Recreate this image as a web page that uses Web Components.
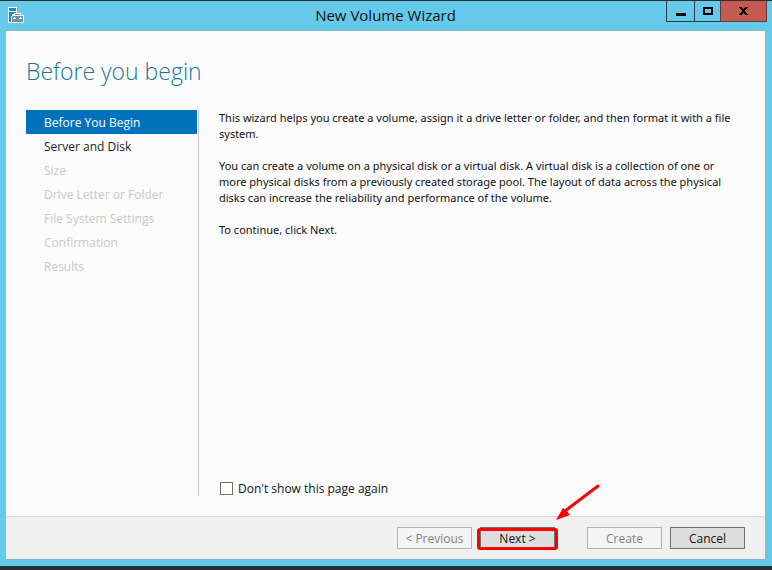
<!DOCTYPE html>
<html lang="en">
<head>
<meta charset="utf-8">
<title>New Volume Wizard</title>
<style>
  html, body { height: 100%; margin: 0; }
  body {
    background: #2d2d30;
    color: #111;
    font: 12px/16px "Open Sans", "Noto Sans", sans-serif;
  }
</style>
</head>
<body>

<wizard-window caption="New Volume Wizard">
  <wizard-page heading="Before you begin">
    <wizard-steps slot="steps">
      <wizard-step state="current">Before You Begin</wizard-step>
      <wizard-step state="ready">Server and Disk</wizard-step>
      <wizard-step>Size</wizard-step>
      <wizard-step>Drive Letter or Folder</wizard-step>
      <wizard-step>File System Settings</wizard-step>
      <wizard-step>Confirmation</wizard-step>
      <wizard-step>Results</wizard-step>
    </wizard-steps>
    <wizard-text>
      <p>This wizard helps you create a volume, assign it a drive letter or folder, and then format it with a file system.</p>
      <p>You can create a volume on a physical disk or a virtual disk. A virtual disk is a collection of one or more physical disks from a previously created storage pool. The layout of data across the physical disks can increase the reliability and performance of the volume.</p>
      <p>To continue, click Next.</p>
    </wizard-text>
    <wizard-check slot="option">Don't show this page again</wizard-check>
  </wizard-page>
  <wizard-actions slot="footer">
    <wizard-button disabled>&lt; Previous</wizard-button>
    <wizard-button marked>Next &gt;</wizard-button>
    <wizard-button slot="finish" disabled>Create</wizard-button>
    <wizard-button slot="finish">Cancel</wizard-button>
  </wizard-actions>
</wizard-window>

<script>
const define = (name, render) => customElements.define(name, class extends HTMLElement {
  constructor() {
    super();
    this.attachShadow({ mode: "open" });
  }
  connectedCallback() {
    this.shadowRoot.innerHTML = render(this);
  }
});

define("wizard-window", (el) => `
  <style>
    :host {
      display: flex;
      flex-direction: column;
      box-sizing: border-box;
      min-height: 100vh;
      border-top: 1px solid #2d2d30;
      border-bottom: 4px solid #2d2d30;
      padding: 0 7px 6px 6px;
      background: #65c9ea;
    }
    header {
      display: grid;
      grid-template-columns: 1fr auto 1fr;
      height: 29px;
    }
    .icon { display: block; margin: 6px 2px; }
    h1 {
      margin: 0;
      color: #111;
      font-size: 15px;
      font-weight: 400;
      line-height: 29px;
    }
    .controls {
      display: flex;
      justify-self: end;
      height: 21px;
      margin-right: -2px;
    }
    .controls button {
      box-sizing: border-box;
      width: 28px;
      height: 21px;
      margin: 0;
      padding: 0;
      border: solid #333842;
      border-width: 0 0 1px 1px;
      border-radius: 0;
      background: none;
    }
    .controls .maximize { width: 26px; }
    .controls .close {
      width: 47px;
      border-color: #5a3c42;
      border-right-width: 1px;
      background: #c45a50;
    }
    .controls svg { display: block; margin: 0 auto; }
    main {
      display: flex;
      flex: 1;
      flex-direction: column;
      border: solid #80b3c5;
      border-width: 1px 0;
      background: #fcfcfc;
    }
  </style>
  <header>
    <svg class="icon" width="16" height="16" viewBox="0 0 16 16" shape-rendering="crispEdges" aria-hidden="true">
      <path fill="#fff" d="M0 0h9v6h4v2h3v8H0z"/>
      <path fill="#1e86d6" d="M1 1h7v3H1zM1 5h7v1H6v1H4v2H3v6H1z"/>
      <path fill="#71909f" d="M7 7h5v1H7zM4 9h11v1H4zM4 10h2v1H4zM7 10h5v1H7zM13 10h2v1h-2zM4 12h11v3H4zM4 11h1v1H4zM8 11h3v1H8zM14 11h1v1h-1z"/>
    </svg>
    <h1>${el.getAttribute("caption")}</h1>
    <div class="controls">
      <button type="button" aria-label="Minimize">
        <svg width="10" height="9" shape-rendering="crispEdges"><path d="M0 6h10v3H0z"/></svg>
      </button>
      <button type="button" class="maximize" aria-label="Maximize">
        <svg width="10" height="9" shape-rendering="crispEdges"><path fill-rule="evenodd" d="M0 0h10v8H0zM2 2v4h6V2z"/></svg>
      </button>
      <button type="button" class="close" aria-label="Close">
        <svg width="9" height="8" shape-rendering="crispEdges"><path d="M0 0h3v1h1v1h1V1h1V0h3v1H8v1H7v1H6v2h1v1h1v1h1v1H6V7H5V6H4v1H3v1H0V7h1V6h1V5h1V3H2V2H1V1H0z"/></svg>
      </button>
    </div>
  </header>
  <main><slot></slot><slot name="footer"></slot></main>
`);

define("wizard-page", (el) => `
  <style>
    :host {
      display: flex;
      flex: 1;
      flex-direction: column;
      padding: 24px 20px 20px;
    }
    h2 {
      margin: 0 0 23px;
      color: #17789b;
      font-size: 23px;
      font-weight: 300;
      line-height: 32px;
    }
    .columns {
      display: grid;
      flex: 1;
      grid-template-columns: 173px 1fr;
      gap: 20px;
    }
    .steps {
      border-right: 1px solid #c8c8c8;
      padding-right: 1px;
    }
    .body {
      display: flex;
      flex-direction: column;
      justify-content: space-between;
    }
  </style>
  <h2>${el.getAttribute("heading")}</h2>
  <div class="columns">
    <div class="steps"><slot name="steps"></slot></div>
    <div class="body"><slot></slot><slot name="option"></slot></div>
  </div>
`);

define("wizard-steps", () => `
  <style>:host, nav { display: block; }</style>
  <nav aria-label="Wizard steps"><slot></slot></nav>
`);

define("wizard-step", (el) => {
  const state = el.getAttribute("state");
  const open = state ? `a href="#" ${state === "current" ? 'aria-current="step"' : ""}` : "span";
  return `
    <style>
      :host {
        display: block;
        color: #c8c8c8;
        line-height: 22px;
      }
      :host([state="ready"]) { color: #1e1e1e; }
      :host([state="current"]) { background: #0072bc; color: #fff; }
      a, span {
        display: block;
        padding: 2px 0 0 18px;
        color: inherit;
        text-decoration: none;
      }
    </style>
    <${open}><slot></slot></${state ? "a" : "span"}>
  `;
});

define("wizard-text", () => `
  <style>
    :host {
      display: block;
      padding-right: 8px;
      font-family: "Noto Sans", "Open Sans", sans-serif;
      font-size: 11px;
    }
    ::slotted(p) { margin: 0 0 16px; }
  </style>
  <slot></slot>
`);

define("wizard-check", () => `
  <style>
    :host { display: block; }
    label {
      display: flex;
      align-items: center;
      gap: 5px;
      padding-left: 1px;
      line-height: 15px;
    }
    input {
      appearance: none;
      box-sizing: border-box;
      width: 13px;
      height: 13px;
      margin: 0;
      border: 1px solid #707070;
      background: #fff;
    }
    input:checked { background: #707070; box-shadow: inset 0 0 0 2px #fff; }
  </style>
  <label><input type="checkbox"><slot></slot></label>
`);

define("wizard-actions", () => `
  <style>
    :host {
      display: flex;
      justify-content: flex-end;
      gap: 32px;
      border-top: 1px solid #d9d9d9;
      padding: 10px 20px 10px;
      background: #f0f0f0;
    }
    div { display: flex; gap: 8px; }
  </style>
  <div><slot></slot></div>
  <div><slot name="finish"></slot></div>
`);

define("wizard-button", (el) => `
  <style>
    :host { display: block; position: relative; }
    button {
      display: block;
      box-sizing: border-box;
      width: 75px;
      height: 22px;
      margin: 0;
      border: 1px solid #707070;
      border-radius: 0;
      padding: 2px 0 0;
      background: #ddd;
      color: #111;
      font: inherit;
      line-height: 18px;
    }
    button:disabled {
      border-color: #adb2b5;
      background: #f4f4f4;
      color: #838383;
    }
    .frame {
      position: absolute;
      inset: 1px -3px -1px;
      border: 3px solid #fe0000;
      border-radius: 3px;
      pointer-events: none;
    }
    .arrow {
      position: absolute;
      right: -46px;
      bottom: 28px;
      pointer-events: none;
    }
  </style>
  <button type="button" ${el.hasAttribute("disabled") ? "disabled" : ""}><slot></slot></button>
  ${el.hasAttribute("marked") ? `
    <div class="frame"></div>
    <svg class="arrow" width="46" height="38" viewBox="0 0 46 38" aria-hidden="true">
      <path d="M43 3L10 28" stroke="#fe0000" stroke-width="3" stroke-linecap="round"/>
      <path d="M1 37L8 25l3 2 4 5z" fill="#fe0000"/>
    </svg>` : ""}
`);
</script>
</body>
</html>
